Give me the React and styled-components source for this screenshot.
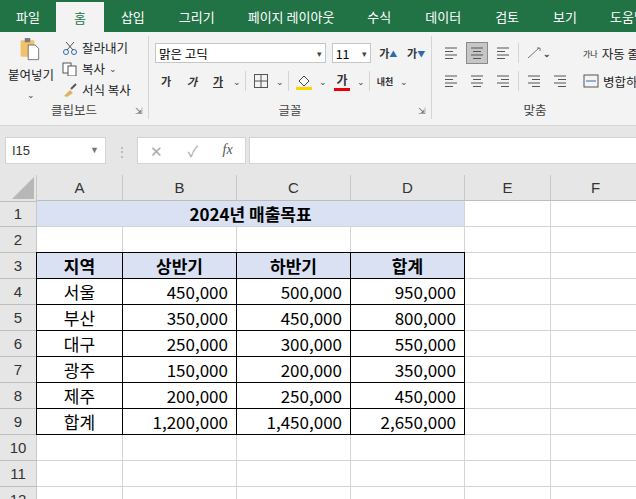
import React from "react";
import styled, { createGlobalStyle } from "styled-components";

const G = createGlobalStyle`
  body{margin:0;font-family:"Noto Sans CJK KR","Noto Sans",sans-serif;background:#e6e6e6;overflow:hidden;}
`;
const Page = styled.div`width:636px;height:499px;display:flex;flex-direction:column;`;
const Tabs = styled.div`height:32px;background:#217346;display:flex;align-items:stretch;padding-left:0;`;
const Tab = styled.div`padding:0 ${p=>p.w||16}px;display:flex;align-items:center;font-size:13px;color:${p=>p.active?"#217346":"#fff"};background:${p=>p.active?"#f3f3f3":"transparent"};margin-top:${p=>p.active?"2px":"0"};white-space:nowrap;`;
const Ribbon = styled.div`height:93px;background:#f3f3f3;border-bottom:1px solid #d6d6d6;display:flex;`;
const Group = styled.div`width:${p=>p.w}px;height:83px;border-right:${p=>p.last?"none":"1px solid #d4d4d4"};margin:4px 0 0;display:flex;flex-direction:column;position:relative;flex-shrink:0;`;
const GBody = styled.div`flex:1;min-height:0;overflow:hidden;display:flex;padding:0 4px;gap:4px;`;
const GLabel = styled.div`height:18px;line-height:18px;text-align:center;font-size:12.5px;color:#444;`;
const Launcher = styled.span`position:absolute;right:5px;bottom:2px;font-size:9px;color:#666;`;
const Col = styled.div`display:flex;flex-direction:column;gap:${p=>p.gap||4}px;`;
const Row = styled.div`display:flex;align-items:center;gap:${p=>p.gap||6}px;height:${p=>p.h||22}px;`;
const Small = styled.span`font-size:12.5px;color:#222;display:flex;align-items:center;gap:4px;white-space:nowrap;`;
const Chev = styled.span`font-size:9px;color:#444;`;
const Input = styled.div`height:20px;border:1px solid #c6c6c6;background:#fff;width:${p=>p.w}px;display:flex;align-items:center;justify-content:space-between;padding:0 3px;font-size:12.5px;box-sizing:border-box;`;
const VSep = styled.div`width:1px;height:20px;background:#d4d4d4;`;
const IBtn = styled.div`width:${p=>p.w||22}px;height:22px;display:flex;align-items:center;justify-content:center;font-size:11px;color:#333;font-weight:bold;background:${p=>p.on?"#c6c6c6":"transparent"};border:${p=>p.on?"1px solid #8a8a8a":"none"};box-sizing:border-box;`;
const FBar = styled.div`height:28px;margin:10px 0 11px;display:flex;align-items:center;`;
const NameBox = styled.div`margin-left:5px;width:101px;height:27px;background:#fff;border:1px solid #d4d4d4;box-sizing:border-box;display:flex;align-items:center;justify-content:space-between;padding:0 6px;font-size:13px;color:#333;font-family:"Liberation Sans",sans-serif;`;
const Dots = styled.div`width:31px;text-align:center;color:#aaa;font-size:12px;`;
const FxBox = styled.div`width:109px;height:27px;background:#fff;border:1px solid #d4d4d4;box-sizing:border-box;display:flex;align-items:center;justify-content:space-around;color:#aaa;font-size:15px;`;
const FInput = styled.div`margin-left:3px;flex:1;height:27px;background:#fff;border:1px solid #d4d4d4;border-right:none;box-sizing:border-box;`;
const Grid = styled.div`display:grid;grid-template-columns:37px 86px 114px 114px 114px 86px 90px;grid-auto-rows:26px;background:#fff;flex:1;overflow:hidden;`;
const Head = styled.div`background:#e6e6e6;border-right:1px solid #c8c8c8;border-bottom:1px solid #bdbdbd;display:flex;align-items:center;justify-content:center;font-size:15px;color:#333;font-family:"Liberation Sans","Noto Sans",sans-serif;box-sizing:border-box;`;
const Corner = styled(Head)`position:relative;height:27px;`;
const Cell = styled.div`box-sizing:border-box;border-right:1px solid #d4d4d4;border-bottom:1px solid #d4d4d4;display:flex;align-items:center;padding:0 8px;justify-content:${p=>p.al||"flex-start"};font-size:17px;color:#000;font-weight:${p=>p.b?700:400};background:${p=>p.bg||"#fff"};grid-column:${p=>p.span||"auto"};font-family:"Noto Sans CJK KR","Liberation Sans",sans-serif;white-space:nowrap;`;
const TCell = styled(Cell)`border:1px solid #000;margin:-1px 0 0 -1px;`;

const tabs=[["파일",16],["홈",18,1],["삽입",17],["그리기",17],["페이지 레이아웃",16],["수식",17],["데이터",17],["검토",17],["보기",17],["도움말",16]];
const data=[["서울","450,000","500,000","950,000"],["부산","350,000","450,000","800,000"],["대구","250,000","300,000","550,000"],["광주","150,000","200,000","350,000"],["제주","200,000","250,000","450,000"],["합계","1,200,000","1,450,000","2,650,000"]];
const cols=["A","B","C","D","E","F"];

const Lines=({a="l"})=>{const xs=a==="l"?[[2,14],[2,10],[2,14],[2,10]]:a==="c"?[[2,14],[4,12],[2,14],[4,12]]:[[2,14],[6,14],[2,14],[6,14]];return <svg width="16" height="14">{xs.map((x,i)=><line key={i} x1={x[0]} x2={x[1]} y1={2+i*3.5} y2={2+i*3.5} stroke="#555"/>)}</svg>};

export default function App(){
  const blank=(r)=>cols.map((c,i)=><Cell key={r+c}/>);
  return <Page><G/>
    <Tabs>{tabs.map(([t,w,a])=><Tab key={t} w={w} active={a}>{t}</Tab>)}
      <Tab style={{marginLeft:"auto"}} w={10}><svg width="14" height="18"><circle cx="7" cy="7" r="5.5" fill="none" stroke="#fff" strokeWidth="1.4"/><line x1="5" x2="9" y1="15" y2="15" stroke="#fff" strokeWidth="1.4"/></svg></Tab>
    </Tabs>
    <Ribbon>
      <Group w={148}>
        <GBody>
          <Col gap={0} style={{alignItems:"center",width:54}}>
            <svg width="34" height="36" viewBox="0 0 34 36"><rect x="2" y="6" width="20" height="24" rx="2" fill="#f0c26e"/><rect x="8" y="3" width="8" height="6" fill="#7a7a7a"/><path d="M13 13h10l5 5v16H13z" fill="#fff" stroke="#444"/></svg>
            <Small>붙여넣기</Small><Chev>⌄</Chev>
          </Col>
          <Col gap={2} style={{paddingTop:2}}>
            <Small><svg width="16" height="14"><circle cx="4" cy="11" r="2.5" fill="none" stroke="#2b6cb0"/><circle cx="12" cy="11" r="2.5" fill="none" stroke="#2b6cb0"/><path d="M5 9L12 1M11 9L4 1" stroke="#555"/></svg>잘라내기</Small>
            <Small><svg width="16" height="14"><rect x="1" y="1" width="8" height="10" fill="#fff" stroke="#555"/><rect x="6" y="4" width="8" height="10" fill="#fff" stroke="#555"/></svg>복사 <Chev>⌄</Chev></Small>
            <Small><svg width="16" height="14"><path d="M2 13l6-6 3 3-6 4z" fill="#e0b060"/><path d="M9 6l5-5" stroke="#555" strokeWidth="2"/></svg>서식 복사</Small>
          </Col>
        </GBody>
        <GLabel>클립보드</GLabel><Launcher>⇲</Launcher>
      </Group>
      <Group w={282}>
        <GBody style={{flexDirection:"column",gap:6,paddingTop:6,paddingLeft:6}}>
          <Row>
            <Input w={172}><span>맑은 고딕</span><Chev>▾</Chev></Input>
            <Input w={40}><span>11</span><Chev>▾</Chev></Input>
            <IBtn>가<sup style={{color:"#2b6cb0",fontSize:8}}>▲</sup></IBtn>
            <IBtn>가<sup style={{color:"#2b6cb0",fontSize:8}}>▼</sup></IBtn>
          </Row>
          <Row gap={4}>
            <IBtn>가</IBtn><IBtn style={{fontStyle:"italic"}}>가</IBtn><IBtn style={{textDecoration:"underline"}}>가</IBtn><Chev>⌄</Chev><VSep/>
            <IBtn><svg width="16" height="16"><rect x="1.5" y="1.5" width="13" height="13" fill="none" stroke="#555"/><path d="M8 1.5v13M1.5 8h13" stroke="#555"/></svg></IBtn><Chev>⌄</Chev><VSep/>
            <IBtn><svg width="18" height="18"><path d="M4 9l5-5 5 5-5 5z" fill="#fff" stroke="#444"/><rect x="1" y="15" width="16" height="3" fill="#ffd400"/></svg></IBtn><Chev>⌄</Chev>
            <IBtn style={{flexDirection:"column",fontSize:12}}><span>가</span><span style={{width:16,height:3,background:"#e00"}}/></IBtn><Chev>⌄</Chev><VSep/>
            <IBtn style={{fontSize:9}}>내천</IBtn><Chev>⌄</Chev>
          </Row>
        </GBody>
        <GLabel>글꼴</GLabel><Launcher>⇲</Launcher>
      </Group>
      <Group w={206} last>
        <GBody style={{paddingTop:6,paddingLeft:8,gap:6}}>
          <Col gap={6}>
            <Row gap={4}><IBtn><Lines/></IBtn><IBtn on><Lines a="c"/></IBtn><IBtn><Lines/></IBtn><VSep/><IBtn w={30}><svg width="18" height="16"><path d="M3 13L14 3" stroke="#777"/><path d="M12 3h3v3" stroke="#777" fill="none"/></svg><Chev>⌄</Chev></IBtn></Row>
            <Row gap={4}><IBtn><Lines/></IBtn><IBtn><Lines a="c"/></IBtn><IBtn><Lines a="r"/></IBtn><VSep/><IBtn><Lines a="r"/></IBtn><IBtn><Lines a="r"/></IBtn></Row>
          </Col>
          <VSep style={{height:60}}/>
          <Col gap={6}>
            <Row><Small><span style={{fontSize:8}}>가나</span> 자동 줄</Small></Row>
            <Row><Small><svg width="16" height="16"><rect x="1" y="2" width="14" height="12" fill="none" stroke="#555"/><path d="M3 8h10" stroke="#2b6cb0"/></svg>병합하고</Small></Row>
          </Col>
        </GBody>
        <GLabel>맞춤</GLabel>
      </Group>
    </Ribbon>
    <FBar>
      <NameBox><span>I15</span><Chev style={{color:"#777"}}>▼</Chev></NameBox>
      <Dots>⋮</Dots>
      <FxBox><span>✕</span><span>✓</span><i style={{fontFamily:"Liberation Serif",color:"#555",fontSize:14}}>fx</i></FxBox>
      <FInput/>
    </FBar>
    <Grid>
      <Corner><svg width="22" height="22" style={{position:"absolute",right:2,bottom:2}}><path d="M22 0V22H0z" fill="#b7b7b7"/></svg></Corner>
      {cols.map(c=><Head key={c}>{c}</Head>)}
      <Head>1</Head><Cell span="span 4" al="center" b bg="#d9e1f2">2024년 매출목표</Cell><Cell/><Cell/>
      <Head>2</Head>{blank(2)}
      <Head>3</Head>{["지역","상반기","하반기","합계"].map(t=><TCell key={t} al="center" b bg="#d9e1f2">{t}</TCell>)}<Cell/><Cell/>
      {data.map((r,i)=><React.Fragment key={i}><Head>{i+4}</Head>
        <TCell al="center">{r[0]}</TCell>{r.slice(1).map((v,j)=><TCell key={j} al="flex-end">{v}</TCell>)}<Cell/><Cell/></React.Fragment>)}
      {[10,11,12].map(n=><React.Fragment key={n}><Head>{n}</Head>{blank(n)}</React.Fragment>)}
    </Grid>
  </Page>;
}
